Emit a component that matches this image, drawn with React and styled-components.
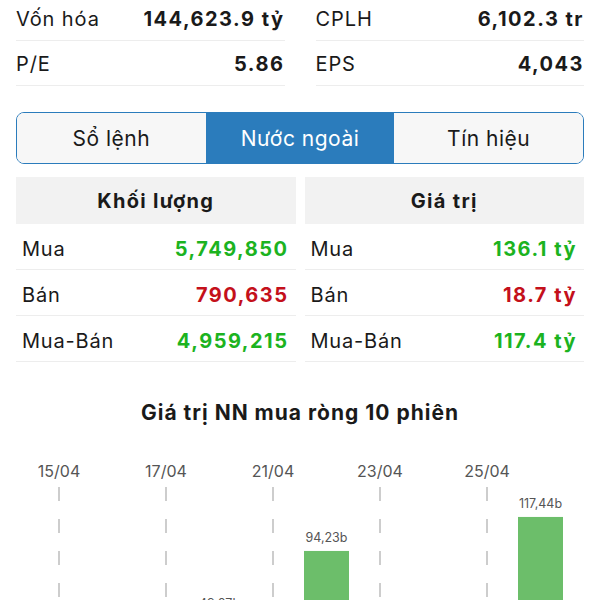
import React from 'react';
import styled, { createGlobalStyle } from 'styled-components';

const GlobalStyle = createGlobalStyle`
  html,
  body {
    margin: 0;
    padding: 0;
    background: #fff;
    overflow: hidden;
  }

  body {
    font-family: Inter, 'Noto Sans', sans-serif;
    color: #1a1a1a;
  }

  * {
    box-sizing: border-box;
  }
`;

const GREEN = '#1cb31f';
const RED = '#c4101b';
const BLUE = '#2b7cbc';

const StyledPage = styled.div`
  width: 600px;
  height: 600px;
  overflow: hidden;
`;

const StyledInfoGrid = styled.div`
  display: grid;
  grid-template-columns: 1fr 1fr;
  column-gap: 31px;
  padding: 0 16px;
  margin-top: -4px;
`;

const StyledInfoRow = styled.div`
  height: 45px;
  display: flex;
  align-items: center;
  justify-content: space-between;
  padding-top: 2px;
  border-bottom: 1px solid #ededed;
  font-size: 20px;
  letter-spacing: 0.9px;

  b {
    font-weight: 700;
    letter-spacing: 1.5px;
  }
`;

const StyledTabs = styled.div`
  display: flex;
  height: 52px;
  margin: 26px 16px 0;
  border: 1.5px solid ${BLUE};
  border-radius: 8px;
  overflow: hidden;
`;

const StyledTab = styled.div`
  flex: 1;
  display: flex;
  align-items: center;
  justify-content: center;
  font-size: 21px;
  letter-spacing: 0.5px;
  background: ${({ $active }) => ($active ? BLUE : '#f7f7f7')};
  color: ${({ $active }) => ($active ? '#fff' : '#1a1a1a')};
`;

const StyledTables = styled.div`
  display: grid;
  grid-template-columns: 1fr 1fr;
  column-gap: 9px;
  padding: 0 16px;
  margin-top: 13px;
`;

const StyledHeader = styled.div`
  height: 47px;
  display: flex;
  align-items: center;
  justify-content: center;
  background: #f2f2f2;
  font-size: 20px;
  font-weight: 700;
  letter-spacing: 1.3px;
`;

const StyledRow = styled.div`
  height: 46px;
  display: flex;
  align-items: center;
  justify-content: space-between;
  padding: 5px 7px 0 6px;
  border-bottom: 1px solid #ededed;
  font-size: 20px;
  letter-spacing: 0.8px;
`;

const StyledNum = styled.span`
  font-weight: 700;
  letter-spacing: 1.5px;
  color: ${({ $down }) => ($down ? RED : GREEN)};
`;

const StyledTitle = styled.h3`
  margin: 39px 0 0;
  line-height: 24px;
  font-size: 21px;
  font-weight: 700;
  text-align: center;
  letter-spacing: 1px;
`;

const StyledChart = styled.svg`
  display: block;
  margin-top: 25px;
`;

const info = [
  ['Vốn hóa', '144,623.9 tỷ'],
  ['CPLH', '6,102.3 tr'],
  ['P/E', '5.86'],
  ['EPS', '4,043'],
];

const tables = [
  {
    title: 'Khối lượng',
    rows: [
      ['Mua', '5,749,850'],
      ['Bán', '790,635', true],
      ['Mua-Bán', '4,959,215'],
    ],
  },
  {
    title: 'Giá trị',
    rows: [
      ['Mua', '136.1 tỷ'],
      ['Bán', '18.7 tỷ', true],
      ['Mua-Bán', '117.4 tỷ'],
    ],
  },
];

const sessions = [
  { date: '15/04', value: -12.4 },
  { date: '16/04', value: -31.2 },
  { date: '17/04', value: -8.6 },
  { date: '18/04', value: 49.07 },
  { date: '21/04', value: -20.5 },
  { date: '22/04', value: 94.23 },
  { date: '23/04', value: -15.3 },
  { date: '24/04', value: -42.1 },
  { date: '25/04', value: -6.8 },
  { date: '26/04', value: 117.44 },
];

const Chart = () => {
  const height = 150;
  const base = 239;
  const scale = 1.465;
  const step = 53.5;
  const first = 59;

  return (
    <StyledChart width="600" height={height} viewBox={`0 0 600 ${height}`}>
      {sessions.map((s, i) => {
        const cx = first + i * step;
        const h = Math.abs(s.value) * scale;
        const top = s.value >= 0 ? base - h : base;

        return (
          <g key={s.date}>
            {i % 2 === 0 && (
              <>
                <text
                  x={cx}
                  y="27"
                  textAnchor="middle"
                  fontSize="16"
                  fill="#555"
                  fontFamily="Inter, sans-serif"
                >
                  {s.date}
                </text>
                <line
                  x1={cx}
                  x2={cx}
                  y1="37"
                  y2={height}
                  stroke="#bdbdbd"
                  strokeWidth="1.5"
                  strokeDasharray="14 18"
                />
              </>
            )}
            <rect x={cx - 22.5} y={top} width="45" height={h} fill="#6cbe6a" />
            {s.value >= 0 && (
              <text
                x={cx}
                y={top - 9}
                textAnchor="middle"
                fontSize="12.5"
                fill="#555"
                fontFamily="Inter, sans-serif"
              >
                {s.value.toFixed(2).replace('.', ',')}b
              </text>
            )}
          </g>
        );
      })}
    </StyledChart>
  );
};

const App = () => (
  <StyledPage>
    <GlobalStyle />

    <StyledInfoGrid>
      {info.map(([label, value]) => (
        <StyledInfoRow key={label}>
          <span>{label}</span>
          <b>{value}</b>
        </StyledInfoRow>
      ))}
    </StyledInfoGrid>

    <StyledTabs>
      <StyledTab>Sổ lệnh</StyledTab>
      <StyledTab $active>Nước ngoài</StyledTab>
      <StyledTab>Tín hiệu</StyledTab>
    </StyledTabs>

    <StyledTables>
      {tables.map(t => (
        <div key={t.title}>
          <StyledHeader>{t.title}</StyledHeader>
          {t.rows.map(([label, value, down]) => (
            <StyledRow key={label}>
              <span>{label}</span>
              <StyledNum $down={down}>{value}</StyledNum>
            </StyledRow>
          ))}
        </div>
      ))}
    </StyledTables>

    <StyledTitle>Giá trị NN mua ròng 10 phiên</StyledTitle>

    <Chart />
  </StyledPage>
);

export default App;
